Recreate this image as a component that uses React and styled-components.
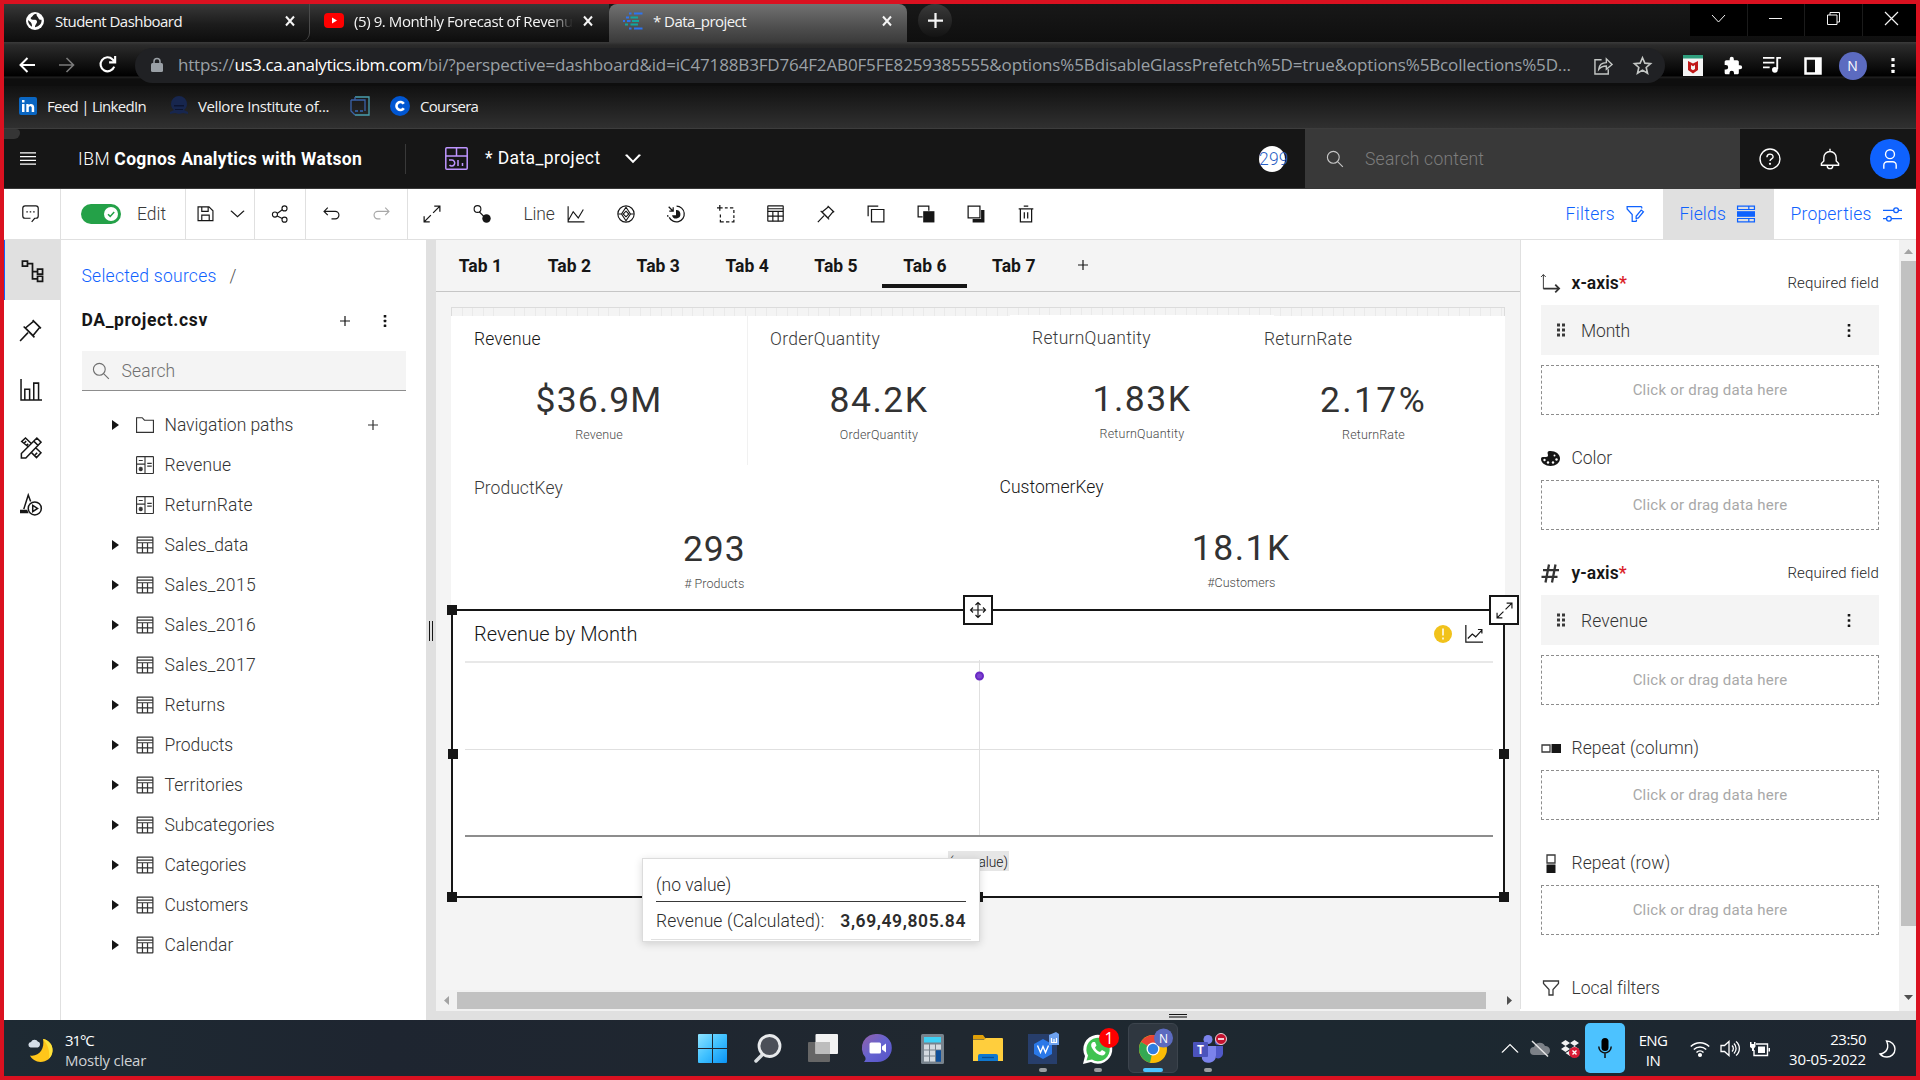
import React from 'react';
import styled, { createGlobalStyle, css } from 'styled-components';

const Global = createGlobalStyle`
  * { box-sizing: border-box; }
  body { margin: 0; background: #fff; }
`;

const plex = '"Roboto", "Liberation Sans", sans-serif';
const segoe = '"Open Sans", "Noto Sans", sans-serif';

/* ---------- frame ---------- */
const Screen = styled.div`
  width: 1920px;
  height: 1080px;
  border: 4px solid #da1120;
  display: flex;
  flex-direction: column;
  overflow: hidden;
  font-family: ${plex};
  font-size: 17.5px;
  font-weight: 350;
  color: #161616;
`;

const Text = styled.span`
  white-space: pre;
  line-height: ${(p) => p.$lh || 24}px;
  font-size: ${(p) => p.$size || 17.5}px;
  font-weight: ${(p) => p.$weight || 'inherit'};
  letter-spacing: ${(p) => p.$ls || 0}px;
  color: ${(p) => p.$color || 'inherit'};
`;

/* ---------- svg icon base ---------- */
const Svg = styled.svg`
  display: block;
  flex: none;
  overflow: visible;
  color: ${(p) => p.$color || 'inherit'};
`;
const Icon = ({ size = 20, color, sw = 2, box = 32, w, h, children }) => (
  <Svg
    width={w || size}
    height={h || size}
    viewBox={`0 0 ${box} ${box}`}
    preserveAspectRatio="none"
    $color={color}
    fill="none"
    stroke="currentColor"
    strokeWidth={sw}
  >
    {children}
  </Svg>
);
const solid = { fill: 'currentColor', stroke: 'none' };

/* ---------- browser chrome ---------- */
const TabStrip = styled.div`
  height: 38px;
  display: flex;
  background: linear-gradient(#181818, #0f0f0f);
  font-family: ${segoe};
  font-weight: 400;
  color: #f4f4f4;
`;
const BrowserTab = styled.div`
  width: ${(p) => p.$w}px;
  height: ${(p) => (p.$active ? 44 : 37)}px;
  padding: 0 ${(p) => p.$end || 14}px ${(p) => (p.$active ? 11 : 4)}px ${(p) => p.$pad}px;
  display: flex;
  align-items: center;
  border-radius: ${(p) => (p.$active ? '8px 8px 0 0' : '0 0 8px 8px')};
  background: ${(p) =>
    p.$active ? 'linear-gradient(#717171, #4a4a4a 60%, #333)' : 'linear-gradient(#383838, #1c1c1c 55%, #0e0e0e)'};
  border-right: ${(p) => (p.$line ? '1px solid #4a4a4a' : '0')};
`;
const TabLabel = styled(Text)`
  flex: 1;
  margin-left: ${(p) => p.$gap || 10}px;
  overflow: hidden;
  ${(p) =>
    p.$fade &&
    css`
      mask-image: linear-gradient(90deg, #000 90%, transparent);
      margin-right: 10px;
    `}
`;
const NewTab = styled.div`
  width: 34px;
  height: 33px;
  margin-left: 11px;
  border-radius: 17px;
  background: linear-gradient(#3a3a3a, #131313);
  display: grid;
  place-items: center;
`;
const WindowButtons = styled.div`
  margin-left: auto;
  display: flex;
  gap: 1px;
  height: 32px;
  background: #1b1b1b;
`;
const WindowButton = styled.div`
  width: ${(p) => p.$w || 56.5}px;
  background: #000;
  display: grid;
  place-items: center;
  padding: 0 0 3px ${(p) => p.$pad || 0}px;
`;

const AddressRow = styled.div`
  height: 44px;
  padding-top: 6px;
  display: flex;
  background: linear-gradient(#3b3b3b 0, #2b2b2b 3px, #000 34px, #222 35px, #0e0e0e 37px, #0e0e0e);
  color: #fff;
  font-weight: 400;
`;
const NavButton = styled.div`
  width: 40px;
  height: 33px;
  display: grid;
  place-items: center;
`;
const NavGroup = styled.div`
  display: flex;
  width: 131px;
  padding-left: 3px;
`;
const AddressBar = styled.div`
  width: 1530px;
  height: 35px;
  border-radius: 18px;
  background: #202124;
  display: flex;
  align-items: center;
  padding: 0 13px 1px 16px;
  color: #9aa0a6;
  font-family: ${segoe};
`;
const Url = styled.div`
  flex: 1;
  display: flex;
  margin-left: 15px;
`;
const AddressIcons = styled.div`
  display: flex;
  gap: 20px;
  color: #c4c7c5;
`;
const Extensions = styled.div`
  display: flex;
  align-items: center;
  height: 35px;
  padding-left: 7.5px;
`;
const ExtSlot = styled.div`
  width: 40px;
  display: grid;
  place-items: center;
`;
const Avatar = styled.div`
  width: ${(p) => p.$d}px;
  height: ${(p) => p.$d}px;
  border-radius: 50%;
  background: ${(p) => p.$bg};
  color: #fff;
  display: grid;
  place-items: center;
  font: ${(p) => p.$font || 14}px ${segoe};
`;

const Bookmarks = styled.div`
  height: 43px;
  background: linear-gradient(#111, #303030);
  border-bottom: 1px solid #3d3d3d;
  display: flex;
  padding-left: 15px;
  font-family: ${segoe};
  font-weight: 400;
  color: #f1f1f1;
`;
const Bookmark = styled.div`
  display: flex;
  align-items: center;
  height: 39px;
  gap: 10px;
  width: ${(p) => p.$w}px;
`;

/* ---------- application header ---------- */
const Header = styled.header`
  height: 60px;
  padding-left: 16px;
  background: #161616;
  border-bottom: 1px solid #393939;
  display: flex;
  align-items: center;
  color: #fff;
  position: relative;
`;
const StatusStub = styled.div`
  position: absolute;
  left: 0;
  top: 0;
  width: 16px;
  height: 10px;
  background: #353535;
  border-radius: 0 4px 6px 0;
`;
const Brand = styled.div`
  display: flex;
  gap: 4px;
  width: 327px;
  margin-left: 42px;
`;
const HeaderRule = styled.div`
  width: 1px;
  height: 30px;
  background: #393939;
`;
const DocTitle = styled.div`
  display: flex;
  align-items: center;
  margin-left: 39px;
`;
const DocName = styled(Text)`
  margin: 0 25px 1px 17px;
  width: 115px;
`;
const CountBadge = styled.div`
  margin-left: auto;
  width: 26px;
  height: 26px;
  border-radius: 50%;
  background: #fff;
  color: #2c5fc4;
  display: flex;
  align-items: center;
  margin-right: 20px;
`;
const HeaderSearch = styled.div`
  width: 435px;
  height: 60px;
  background: #393939;
  display: flex;
  align-items: center;
  gap: 21px;
  padding: 1px 0 0 21px;
  color: #c6c6c6;
`;
const HeaderAction = styled.div`
  width: ${(p) => p.$w || 60}px;
  padding-left: ${(p) => p.$pad || 0}px;
  display: grid;
  place-items: center;
`;

/* ---------- dashboard toolbar ---------- */
const Toolbar = styled.div`
  height: 51px;
  border-bottom: 1px solid #e0e0e0;
  background: #fff;
  display: flex;
`;
const ToolGroup = styled.div`
  display: flex;
  align-items: center;
  width: ${(p) => p.$w}px;
  padding-left: ${(p) => p.$pad || 0}px;
  border-right: 1px solid #e0e0e0;
`;
const Tool = styled.div`
  width: ${(p) => p.$w || 50}px;
  height: 50px;
  margin-right: ${(p) => p.$gap || 0}px;
  display: grid;
  place-items: center;
  padding-bottom: 1px;
  color: ${(p) => (p.$dim ? '#a8a8a8' : '#161616')};
`;
const ToolRow = styled.div`
  display: flex;
  align-items: center;
  margin-left: -1px;
`;
const ToolLabel = styled(Text)`
  width: 32px;
  margin-left: 16.500px;
  color: #393939;
`;
const Toggle = styled.div`
  width: 40px;
  height: 20px;
  border-radius: 10px;
  background: #24a148;
  display: flex;
  justify-content: flex-end;
  padding: 3px;
  margin-right: 16px;
`;
const ToggleKnob = styled.div`
  width: 14px;
  height: 14px;
  border-radius: 50%;
  background: #fff;
  display: grid;
  place-items: center;
`;
const PaneButtons = styled.div`
  margin-left: auto;
  display: flex;
  color: #0f62fe;
`;
const PaneButton = styled.div`
  height: 50px;
  width: ${(p) => p.$w}px;
  padding-left: 16.5px;
  display: flex;
  align-items: center;
  gap: 11.5px;
  background: ${(p) => (p.$active ? '#e0e0e0' : '#fff')};
`;

/* ---------- body ---------- */
const Body = styled.div`
  height: 780px;
  display: flex;
`;
const SideNav = styled.nav`
  width: 57px;
  background: #fff;
  border-right: 1px solid #e0e0e0;
`;
const NavItem = styled.div`
  height: ${(p) => p.$h || 60}px;
  display: grid;
  place-items: center;
  padding-right: ${(p) => (p.$active ? 0 : 4)}px;
  background: ${(p) => (p.$active ? '#e0e0e0' : '#fff')};
  border-left: 1px solid ${(p) => (p.$active ? '#0f62fe' : '#fff')};
`;
const Sources = styled.aside`
  width: 365px;
  background: #fff;
  padding: 24px 20px 0 20.5px;
`;
const Crumb = styled.div`
  display: flex;
  gap: 13px;
  color: #525252;
`;
const SourceHead = styled.div`
  display: flex;
  align-items: center;
  height: 60px;
  margin-top: 2px;
  padding-right: 11px;
`;
const SourceActions = styled.div`
  margin-left: auto;
  display: flex;
  align-items: center;
  gap: 25px;
  padding-top: 1px;
`;
const MenuSlot = styled.div`
  width: ${(p) => p.$w || 20}px;
  display: grid;
  place-items: center;
`;
const SearchBox = styled.div`
  width: 324px;
  height: 40px;
  margin-top: 1px;
  border-bottom: 1px solid #8d8d8d;
  background: #f4f4f4;
  display: flex;
  align-items: center;
  gap: 11.5px;
  padding-left: 10.5px;
  color: #6f6f6f;
`;
const Tree = styled.div`
  padding-top: 14px;
`;
const TreeRow = styled.div`
  height: 40px;
  display: flex;
  align-items: center;
  padding: 0 28px 0 30px;
  color: #333;
`;
const Caret = styled.div`
  width: 24px;
  height: 20px;
  display: flex;
  align-items: center;
`;
const RowLabel = styled(Text)`
  margin-left: 11px;
  flex: 1;
`;
const Splitter = styled.div`
  width: 10px;
  background: #e0e0e0;
  display: flex;
  justify-content: center;
  gap: 2px;
  padding-top: 381px;
`;
const Grip = styled.i`
  width: ${(p) => p.$w || 1}px;
  height: ${(p) => p.$h || 20}px;
  background: ${(p) => p.$bg || '#161616'};
`;
const Stage = styled.div`
  flex: 1;
  display: flex;
  flex-direction: column;
`;
const StageRow = styled.div`
  height: 771px;
  display: flex;
`;
const BottomStrip = styled.div`
  height: 9px;
  background: #e0e0e0;
  display: flex;
  flex-direction: column;
  gap: 1px;
  padding: 3px 0 0 733px;
`;

const Center = styled.main`
  width: 1084px;
  background: #f4f4f4;
  display: flex;
  flex-direction: column;
`;
const Tabs = styled.div`
  height: 52px;
  border-bottom: 1px solid #c6c6c6;
  display: flex;
  gap: 4px;
  padding-left: 2px;
`;
const Tab = styled.div`
  width: 84.9px;
  height: 48px;
  padding-top: 14px;
  text-align: center;
  border-bottom: 4px solid ${(p) => (p.$active ? '#161616' : 'transparent')};
`;
const AddTab = styled.div`
  padding-left: 18px;
`;
const Board = styled.div`
  width: 1054px;
  margin: 15px 0 0 15px;
  position: relative;
`;
const Ruler = styled.div`
  height: 9px;
  border: 1px solid #dcdcdc;
  border-bottom: 0;
  background: repeating-linear-gradient(90deg, transparent 0 9.5px, #eaeaea 9.5px 10.5px);
`;
const CardRow = styled.div`
  display: flex;
  height: ${(p) => p.$h}px;
  background: #fff;
`;
const Card = styled.section`
  width: ${(p) => p.$w}px;
  margin-right: ${(p) => p.$overlap || 0}px;
  margin-top: ${(p) => (p.$up ? -1 : 0)}px;
  flex: none;
  background: ${(p) => (p.$clear ? 'transparent' : '#fff')};
  padding-top: 11px;
  display: flex;
  flex-direction: column;
  border-right: ${(p) => (p.$edge ? '1px solid #f1f1f1' : '0')};
`;
const CardTitle = styled(Text)`
  margin: 0 0 28px ${(p) => p.$x || 23}px;
`;
const CardValue = styled(Text)`
  text-align: center;
  margin-bottom: 6px;
`;
const CardNote = styled(Text)`
  text-align: center;
`;
const Widget = styled.section`
  position: relative;
  width: 1054px;
  height: 289px;
  border: 2px solid #161616;
  background: #fff;
`;
const WidgetHead = styled.div`
  display: flex;
  align-items: center;
  height: 47px;
  padding: 0 20.5px 2px 21px;
`;
const WidgetIcons = styled.div`
  margin-left: auto;
  display: flex;
  gap: 13px;
  align-items: center;
`;
const Plot = styled.div`
  height: 180px;
  padding-left: 11.5px;
`;
const Handle = styled.i`
  position: absolute;
  left: ${(p) => p.$x - 5}px;
  top: ${(p) => p.$y - 5}px;
  width: 10px;
  height: 10px;
  background: #161616;
`;
const CornerButton = styled.div`
  position: absolute;
  left: ${(p) => p.$x}px;
  top: -16px;
  width: 30px;
  height: 30px;
  border: 2px solid #161616;
  background: #fff;
  display: grid;
  place-items: center;
`;
const AxisLabel = styled.div`
  margin: 13px 0 0 495px;
  width: 61px;
  height: 20px;
  background: #e6e6e6;
  text-align: center;
  line-height: 20px;
`;
const Tooltip = styled.div`
  position: absolute;
  left: 189px;
  top: 247px;
  width: 338px;
  height: 84px;
  background: #fff;
  border: 1px solid #dcdcdc;
  box-shadow: 0 2px 8px rgba(0, 0, 0, 0.15);
  padding: 14px 13px 0;
  color: #2c2c2c;
`;
const TipHead = styled.div`
  border-bottom: 1px solid #393939;
  height: 29px;
`;
const TipRow = styled.div`
  display: flex;
  justify-content: space-between;
  height: 38px;
  padding: 7px 5px 0;
  margin: 0 -5px;
  border-bottom: 1px solid #e0e0e0;
`;
const HScroll = styled.div`
  margin-top: auto;
  height: 21px;
  background: #f1f1f1;
  display: flex;
  align-items: center;
  padding: 0 8px 0 8px;
`;
const HThumb = styled.div`
  width: 1029px;
  height: 17px;
  margin: 0 auto 0 8px;
  background: #c1c1c1;
`;

/* ---------- fields pane ---------- */
const Fields = styled.aside`
  width: 379px;
  height: 769px;
  background: #fff;
  border-left: 1px solid #e0e0e0;
  padding: 21px 20px 0;
`;
const Slot = styled.section`
  margin-bottom: ${(p) => p.$mb || 21}px;
`;
const SlotHead = styled.div`
  height: 44px;
  display: flex;
  align-items: center;
  color: #333;
`;
const SlotIcon = styled.div`
  width: 30.5px;
`;
const SlotName = styled(Text)`
  flex: 1;
`;
const Star = styled.span`
  color: #da1e28;
`;
const FieldBox = styled.div`
  height: 50px;
  margin-bottom: 10px;
  background: #f4f4f4;
  display: flex;
  align-items: center;
  padding: 0 24px 0 12px;
  color: #333;
`;
const FieldName = styled(Text)`
  flex: 1;
  margin-left: 12px;
  padding-top: 1px;
`;
const DropBox = styled.div`
  height: 50px;
  border: 1px dashed #8d8d8d;
  display: grid;
  place-items: center;
  font-weight: 400;
`;
const VScroll = styled.div`
  width: 17px;
  background: #f1f1f1;
  display: flex;
  flex-direction: column;
  align-items: flex-end;
  padding: 9px 0 11px;
`;
const VThumb = styled.div`
  width: 15px;
  height: 665px;
  margin: 7px 0 auto;
  background: #c1c1c1;
`;
const ArrowSlot = styled.div`
  width: 12px;
  height: 5px;
`;

/* ---------- taskbar ---------- */
const Taskbar = styled.footer`
  height: 56px;
  background: linear-gradient(90deg, #1e2a33, #1e2530 20%, #202830 50%, #1c2830 75%, #1e2630);
  display: flex;
  align-items: center;
  font-family: ${segoe};
  font-weight: 400;
  color: #fff;
`;
const Weather = styled.div`
  width: 681px;
  display: flex;
  align-items: center;
  gap: 11px;
  padding: 4px 0 0 24px;
`;
const Lines = styled.div`
  display: flex;
  flex-direction: column;
  align-items: ${(p) => p.$align || 'flex-start'};
  padding-top: ${(p) => p.$top || 0}px;
`;
const DockItem = styled.div`
  width: ${(p) => (p.$active ? 50 : 55)}px;
  margin: ${(p) => (p.$active ? '0 2.5px' : '0')};
  height: 50px;
  border-radius: 6px;
  display: flex;
  flex-direction: column;
  align-items: center;
  padding-top: ${(p) => (p.$active ? 10 : 11)}px;
  border: ${(p) => (p.$active ? '1px solid #3c444d' : '0')};
  background: ${(p) => (p.$active ? '#2f3740' : 'transparent')};
`;
const Running = styled.i`
  width: ${(p) => (p.$active ? 20 : 8)}px;
  height: 4px;
  border-radius: 2px;
  margin-top: 4px;
  background: ${(p) => (p.$active ? '#4cc2ff' : '#9a9da1')};
`;
const Tray = styled.div`
  margin-left: auto;
  display: flex;
  align-items: center;
`;
const TrayIcon = styled.div`
  width: ${(p) => p.$w || 30}px;
  padding-top: 1px;
  padding-right: ${(p) => p.$pr || 0}px;
  display: grid;
  place-items: center;
`;
const Mic = styled.div`
  width: 40px;
  height: 50px;
  border-radius: 5px;
  background: #4cc2ff;
  display: grid;
  place-items: center;
`;
const Clock = styled(Lines)`
  width: 87px;
`;

/* ---------- glyphs ---------- */
const CloseX = () => (
  <Icon size={10} box={10} sw={2}><path d="M1 0.5l8 9M9 0.5l-8 9" /></Icon>
);
const Plus = ({ size = 10, sw = 1.2, color }) => (
  <Icon size={size} box={10} sw={sw} color={color}><path d="M5 0v10M0 5h10" /></Icon>
);
const Kebab = ({ h = 12, r = 1.3, color = '#161616' }) => (
  <Svg width="4" height={h} viewBox={`0 0 4 ${h}`} fill={color}>
    <rect x={2 - r} y="0" width={2 * r} height={2 * r} rx=".5" />
    <rect x={2 - r} y={h / 2 - r} width={2 * r} height={2 * r} rx=".5" />
    <rect x={2 - r} y={h - 2 * r} width={2 * r} height={2 * r} rx=".5" />
  </Svg>
);
const SearchGlyph = ({ size = 18 }) => (
  <Icon size={size} sw={2}><circle cx="13" cy="13" r="10.5" /><path d="M21 21l9 9" /></Icon>
);
const PinGlyph = ({ size }) => (
  <Icon size={size} sw={2.2}>
    <path d="M19 1.500l11.500 11.500M20.500 3L9 12.500l10.500 10.500L29 11.500M6.500 10.500l15 15M12.500 19L1.500 30.500" />
  </Icon>
);
const TableGlyph = ({ size = 17 }) => (
  <Icon size={size} sw={2.2}>
    <rect x="1.500" y="1.500" width="29" height="29" rx="1" />
    <path d="M1.500 7h29M1.500 12h29M1.500 21h29M11 12v18.500M21 12v18.500" />
  </Icon>
);
const ExpandGlyph = ({ size = 18 }) => (
  <Icon size={size} sw={2.2}><path d="M20 2h10v10M30 2L18 14M12 30H2V20M2 30L14 18" /></Icon>
);
const CalcGlyph = () => (
  <Icon size={18} sw={2}>
    <rect x="1" y="1" width="30" height="30" rx="1" />
    <path d="M16 1v30M1 14.500h15M5 8h7M20 13h8M20 18h8M8.500 19v8M4.500 23h8M5.800 20.200l5.400 5.600M11.200 20.200l-5.400 5.600" />
  </Icon>
);
const CaretRight = () => (
  <Svg width="7" height="10" viewBox="0 0 7 10" fill="#161616"><path d="M0 0l7 5-7 5z" /></Svg>
);

/* ---------- data ---------- */
const tree = [
  { name: 'Navigation paths', kind: 'folder', ls: -0.04, add: true },
  { name: 'Revenue', kind: 'calc', ls: 0.14 },
  { name: 'ReturnRate', kind: 'calc', ls: 0.22 },
  { name: 'Sales_data', ls: 0.08 },
  { name: 'Sales_2015', ls: 0.35 },
  { name: 'Sales_2016', ls: 0.35 },
  { name: 'Sales_2017', ls: 0.35 },
  { name: 'Returns', ls: 0.15 },
  { name: 'Products', ls: -0.09 },
  { name: 'Territories', ls: 0.11 },
  { name: 'Subcategories', ls: 0 },
  { name: 'Categories', ls: -0.1 },
  { name: 'Customers', ls: -0.08 },
  { name: 'Calendar', ls: 0.09 },
];

const topCards = [
  { title: 'Revenue', tls: 0.14, value: '$36.9M', vls: 1.1, nls: 0.1, w: 297, edge: true, dark: true },
  { title: 'OrderQuantity', tls: 0.3, value: '84.2K', vls: 1.5, nls: 0.19, w: 262, x: 22 },
  { title: 'ReturnQuantity', tls: 0.28, value: '1.83K', vls: 1.5, nls: 0.2, w: 264, overlap: -32, up: true, x: 22 },
  { title: 'ReturnRate', tls: 0.22, value: '2.17%', vls: 2.4, nls: 0.13, w: 263, clear: true, x: 22 },
];
const lowCards = [
  { title: 'ProductKey', tls: 0.04, value: '293', vls: 0.9, note: '# Products', nls: 0.04, w: 526.5 },
  { title: 'CustomerKey', tls: 0.05, value: '18.1K', vls: 1.5, note: '#Customers', nls: 0.05, w: 527.5, up: true, dark: true, x: 22 },
];

const MetricCard = ({ c }) => (
  <Card $w={c.w} $edge={c.edge} $overlap={c.overlap} $up={c.up} $clear={c.clear}>
    <CardTitle $ls={c.tls} $x={c.x} $color={c.dark ? '#161616' : '#3a3a3a'}>{c.title}</CardTitle>
    <CardValue $lh={42} $size={35.5} $weight={450} $ls={c.vls} $color="#323232">{c.value}</CardValue>
    <CardNote $lh={16} $size={12.5} $ls={c.nls} $color="#4c4c4c">{c.note || c.title}</CardNote>
  </Card>
);

const Drop = () => (
  <DropBox><Text $size={15} $ls={0.22} $color="#a8a8a8">Click or drag data here</Text></DropBox>
);
const Field = ({ name, ls }) => (
  <FieldBox>
    <Svg width="16" height="14" viewBox="0 0 16 14" fill="#393939">
      {[0.5, 5.5, 10.5].map((y) => (
        <g key={y}><rect x="4" y={y} width="3" height="3" /><rect x="9" y={y} width="3" height="3" /></g>
      ))}
    </Svg>
    <FieldName $ls={ls}>{name}</FieldName>
    <MenuSlot $w={12}><Kebab h={13} /></MenuSlot>
  </FieldBox>
);

function Browser() {
  return (
    <>
      <TabStrip>
        <BrowserTab $w={306} $pad={22} $line>
          <Svg width="18" height="18" viewBox="0 0 18 18">
            <circle cx="9" cy="9" r="9" fill="#fff" />
            <path d="M10.500 1.800C7 2 7 4.500 5 5.500c-1 1 .5 2.500 2.500 2.200 2-.2 3.500.3 3.500 2 0 2-2 2.500-2 5.500 4.500-1 7-4 6.500-7.500-1 .3-2.500 0-3-1.500s-2-1.500-2-4.400zM2 8c0 3 1.500 5.500 4 6.800 0-2-.3-3.800-1.500-4.800C3.500 9.200 2.800 8.500 2 8z" fill="#222" />
          </Svg>
          <TabLabel $size={15} $ls={-0.54} $gap={11}>Student Dashboard</TabLabel>
          <CloseX />
        </BrowserTab>
        <BrowserTab $w={299} $pad={14} $end={16}>
          <Svg width="20" height="15" viewBox="0 0 20 15"><rect width="20" height="15" rx="4" fill="#f00" /><path d="M8 4.500v6l5-3z" fill="#fff" /></Svg>
          <TabLabel $size={15} $ls={-0.41} $fade>(5) 9. Monthly Forecast of Revenue</TabLabel>
          <CloseX />
        </BrowserTab>
        <BrowserTab $w={298} $pad={14} $end={15} $active>
          <Svg width="20" height="18" viewBox="0 0 20 18" strokeWidth="2.200" fill="none">
            <path d="M6 1.500h2.500M11 1.500h8.500M0 9h2M4 9h3.500M6 16.500h2.500M11 16.500h8.500M3 5.500h3" stroke="#2d74f0" />
            <path d="M7.500 5.500H15M9 9h7M2 12.500h3M7.500 12.500H15" stroke="#12a5a0" />
          </Svg>
          <TabLabel $size={15} $ls={-0.55}>* Data_project</TabLabel>
          <CloseX />
        </BrowserTab>
        <NewTab><Plus size={15} sw={1.5} /></NewTab>
        <WindowButtons>
          <WindowButton><Icon size={13} box={13} sw={1}><path d="M0 3l6.500 7L13 3" /></Icon></WindowButton>
          <WindowButton><Icon size={13} box={13} sw={1}><path d="M0 6.500h13" /></Icon></WindowButton>
          <WindowButton $w={57}><Icon size={13} box={13} sw={1}><path d="M.5 3h9.500v9.500H.5zM3 3V.5h9.500V10H10" /></Icon></WindowButton>
          <WindowButton $w={53} $pad={3}><Icon size={13} box={13} sw={1.2}><path d="M0 0l13 13M13 0L0 13" /></Icon></WindowButton>
        </WindowButtons>
      </TabStrip>
      <AddressRow>
        <NavGroup>
          <NavButton><Icon size={16} box={16}><path d="M16 8H1.500M8.500 1L1.500 8l7 7" /></Icon></NavButton>
          <NavButton><Icon size={16} box={16} color="#7b7b7b" sw={1.6}><path d="M0 8h14.500M7.500 1l7 7-7 7" /></Icon></NavButton>
          <NavButton><Icon size={17} box={16}><path d="M14.300 10a6.600 6.600 0 1 1-1.500-6.800L15 5.500M15.200 0v6H9.500" /></Icon></NavButton>
        </NavGroup>
        <AddressBar>
          <Svg width="12" height="14" viewBox="0 0 12 14" fill="#9aa0a6"><rect y="5" width="12" height="9" rx="1.500" /><path d="M3 6V3.500a3 3 0 0 1 6 0V6" fill="none" stroke="#9aa0a6" strokeWidth="1.500" /></Svg>
          <Url>
            <Text $size={17} $ls={-0.2}>https://</Text>
            <Text $size={17} $ls={-0.4} $color="#fff">us3.ca.analytics.ibm.com</Text>
            <Text $size={17} $ls={-0.145}>/bi/?perspective=dashboard&id=iC47188B3FD764F2AB0F5FE8259385555&options%5BdisableGlassPrefetch%5D=true&options%5Bcollections%5D...</Text>
          </Url>
          <AddressIcons>
            <Icon size={19} box={20} sw={1.500}><path d="M8 4H1v15h14v-5M5 14c.5-5 3-7 8-7V3l6 6-6 5v-3.500c-4 0-6 1-8 3.500z" /></Icon>
            <Icon size={19} box={20} sw={1.700}><path d="M10 1.800l2.500 5.700 6 .6-4.600 4 1.400 6-5.300-3.200-5.300 3.200 1.400-6-4.600-4 6-.6z" /></Icon>
          </AddressIcons>
        </AddressBar>
        <Extensions>
          <ExtSlot><Svg width="20" height="21" viewBox="0 0 20 21"><rect width="20" height="21" fill="#f4f4f4" /><rect width="20" height="3.500" fill="#2f9e7d" /><path d="M5 6l5 2.500L15 6v9l-5 3.500L5 15zM8 10v4l2 1.300 2-1.300v-4l-2 1.200z" fill="#c01818" fillRule="evenodd" /></Svg></ExtSlot>
          <ExtSlot><Svg width="20" height="20" viewBox="0 0 24 24" fill="#fff"><path d="M20.500 11H19V7c0-1.100-.9-2-2-2h-4V3.500a2.500 2.500 0 0 0-5 0V5H4c-1.100 0-2 .9-2 2v3.800h1.500a2.700 2.700 0 0 1 0 5.400H2V20c0 1.100.9 2 2 2h3.800v-1.500a2.700 2.700 0 0 1 5.400 0V22H17c1.100 0 2-.9 2-2v-4h1.500a2.500 2.500 0 0 0 0-5z" /></Svg></ExtSlot>
          <ExtSlot><Icon size={19} box={20}><path d="M0 2h12M0 7h12M0 12h7M15 14V2h4" /><circle cx="12.500" cy="14.500" r="3" {...solid} /></Icon></ExtSlot>
          <ExtSlot><Icon size={18} box={18} sw={2.500}><path d="M1.500 1.500h15v15h-15z" /><path d="M11 1h6v16h-6z" {...solid} /></Icon></ExtSlot>
          <ExtSlot><Avatar $d={28} $bg="#5c6bc0">N</Avatar></ExtSlot>
          <ExtSlot><Kebab h={15} r={1.600} color="#fff" /></ExtSlot>
        </Extensions>
      </AddressRow>
      <Bookmarks>
        <Bookmark $w={151}>
          <Svg width="18" height="18" viewBox="0 0 18 18"><rect width="18" height="18" rx="2" fill="#0a66c2" /><path d="M3 7h2.500v8H3zM3 3h2.500v2.500H3zM7.300 7h2.400v1.200c.8-2 5.500-2 5.500 2V15h-2.500v-4.300c0-2-2.900-2-2.900 0V15H7.300z" fill="#fff" /></Svg>
          <Text $size={15} $ls={-0.7}>Feed | LinkedIn</Text>
        </Bookmark>
        <Bookmark $w={180}>
          <Svg width="18" height="19" viewBox="0 0 18 19" fill="#17264e"><path d="M9 0a8 8 0 0 1 8 8c0 3-1.500 5-3 6l4 2v2l-5-1-4 1-4-1-5 1v-2l4-2c-1.500-1-3-3-3-6a8 8 0 0 1 8-8z" /><path d="M4 9h10v1.500H4zM5 13h8v1H5z" fill="#0c1430" /></Svg>
          <Text $size={15} $ls={-0.4}>Vellore Institute of...</Text>
        </Bookmark>
        <Bookmark $w={40}>
          <Svg width="20" height="20" viewBox="0 0 20 20" fill="none" strokeWidth="1.300"><path d="M5 1h14v18H5" stroke="#4a9fae" /><path d="M5 1v3M1 4h14v11M1 4v11l4 4" stroke="#3a62a8" /><path d="M5 15h3M10 15h3" stroke="#3568b8" /></Svg>
        </Bookmark>
        <Bookmark $w={120}>
          <Avatar $d={20} $bg="#0056d2"><Icon size={10} box={10} sw={2.600}><path d="M8.800 2.800a4 4 0 1 0 0 4.400" /></Icon></Avatar>
          <Text $size={15} $ls={-0.7}>Coursera</Text>
        </Bookmark>
      </Bookmarks>
    </>
  );
}

function AppHeader() {
  return (
    <Header>
      <StatusStub />
      <Icon w={16} h={13} box={16} sw={1.600}><path d="M0 1h16M0 5.700h16M0 10.300h16M0 15h16" /></Icon>
      <Brand>
        <Text $ls={0.6}>IBM</Text>
        <Text $ls={0.35} $weight={700}>Cognos Analytics with Watson</Text>
      </Brand>
      <HeaderRule />
      <DocTitle>
        <Icon size={23} box={23} sw={1.500} color="#be95ff">
          <rect x=".8" y=".8" width="21.400" height="21.400" rx="1" />
          <path d="M.8 9h21.400M11.500.8V9M4 13h3a3 3 0 1 1-2.500 5M13 19v-6M17.500 19v-3" />
        </Icon>
        <DocName $ls={0.4} $weight={400}>* Data_project</DocName>
        <Icon w={16} h={9} box={16} sw={2.400}><path d="M1 1l7 13 7-13" /></Icon>
      </DocTitle>
      <CountBadge><Text $ls={0.2}>299</Text></CountBadge>
      <HeaderSearch>
        <SearchGlyph size={18} />
        <Text $ls={0.24} $color="#7d7d7d">Search content</Text>
      </HeaderSearch>
      <HeaderAction><Icon size={22} sw={2}><circle cx="16" cy="16" r="14.500" /><path d="M11.500 13.500c0-6 9-6 9-.500 0 3-4.500 2.500-4.500 6" /><circle cx="16" cy="23" r="1.600" {...solid} /></Icon></HeaderAction>
      <HeaderAction><Icon size={22} sw={2}><path d="M28.500 22.500L25 19v-5a9 9 0 0 0-18 0v5l-3.500 3.500V25h25zM12 25v1a4 4 0 0 0 8 0v-1M16 5V1" /></Icon></HeaderAction>
      <HeaderAction $w={56} $pad={4}>
        <Avatar $d={40} $bg="#0f62fe"><Icon size={22} sw={2}><circle cx="16" cy="9" r="6.500" /><path d="M7 30v-5a5 5 0 0 1 5-5h8a5 5 0 0 1 5 5v5" /></Icon></Avatar>
      </HeaderAction>
    </Header>
  );
}

function DashboardToolbar() {
  return (
    <Toolbar>
      <ToolGroup $w={57}>
        <Tool $w={52}><Icon size={19} sw={2}><path d="M16 24h-9a4 4 0 0 1-4-4V7a4 4 0 0 1 4-4h18a4 4 0 0 1 4 4v13a4 4 0 0 1-4 4h-2l-5 6" /><path d="M9 12h2.500v2.500H9zM14.700 12h2.500v2.500h-2.500zM20.500 12H23v2.500h-2.500z" {...solid} /></Icon></Tool>
      </ToolGroup>
      <ToolGroup $w={125} $pad={20}>
        <Toggle><ToggleKnob><Icon size={8} box={8} sw={1.500} color="#24a148"><path d="M1 4.200l2.200 2.200L7.200 2" /></Icon></ToggleKnob></Toggle>
        <Text $ls={0} $color="#393939">Edit</Text>
      </ToolGroup>
      <ToolGroup $w={69} $pad={3}>
        <Tool $w={33}><Icon size={17} sw={2.200}><path d="M2 3.500h20.500L30 11v18.500H2zM9 3.500V12h12V3.500M9 29.500V19h14v10.500" /></Icon></Tool>
        <Tool $w={34}><Icon w={13} h={8} box={12} sw={1.400}><path d="M0 1l6 9 6-9" /></Icon></Tool>
      </ToolGroup>
      <ToolGroup $w={51}>
        <Tool><Icon size={18} sw={2}><circle cx="7" cy="17" r="4.500" /><circle cx="24" cy="6" r="4.500" /><circle cx="24" cy="26" r="4.500" /><path d="M11 15l9-6.500M11 19.500l9 4.500" /></Icon></Tool>
      </ToolGroup>
      <ToolGroup $w={102}>
        <Tool><Icon size={17} sw={2.200}><path d="M9 5L2 12l7 7M2 12h21a7 7 0 0 1 0 14h-7" /></Icon></Tool>
        <Tool $dim><Icon size={17} sw={2.200}><path d="M23 5l7 7-7 7M30 12H9a7 7 0 0 0 0 14h5" /></Icon></Tool>
      </ToolGroup>
      <ToolRow>
        <Tool><ExpandGlyph size={18} /></Tool>
        <Tool><Icon size={18} sw={2}><circle cx="8" cy="7" r="6" /><path d="M11 12l8 8" /><circle cx="24" cy="24" r="7.500" {...solid} /></Icon></Tool>
        <ToolLabel $ls={-0.15}>Line</ToolLabel>
        <Tool $w={41} $gap={4}><Icon size={18} sw={2}><path d="M2 2v28h29M2 28L11 12l9 11 9-15" /></Icon></Tool>
        <Tool><Icon size={18} sw={2}><circle cx="16" cy="16" r="14.500" /><path d="M16 4l8 12-8 12L8 16zM16 11l5 5-5 5-5-5zM2 16h6M24 16h6" /></Icon></Tool>
        <Tool><Icon size={18} sw={2.200}><path d="M17 2a14 14 0 1 1-13 20M1 18a14 14 0 0 0 1 3M3 3l8 8M11 4v7H4" /><path d="M16 9a7.500 7.500 0 1 1-7 9h7z" {...solid} /></Icon></Tool>
        <Tool><Icon size={18} sw={2.200}><path d="M5 0v10M0 5h10M14 5h5M23 5h6M30 9v5M30 18v5M30 26v4h-4M22 30h-6M12 30H6v-4M6 22v-5" /></Icon></Tool>
        <Tool><TableGlyph size={17} /></Tool>
        <Tool><PinGlyph size={18} /></Tool>
        <Tool><Icon size={18} sw={2.200}><path d="M8 8h22v22H8zM2 20V2h18" /></Icon></Tool>
        <Tool><Icon size={18} sw={2.200}><path d="M10 21H2V2h19v8" /><path d="M11 11h20v20H11z" {...solid} /></Icon></Tool>
        <Tool><Icon size={18} sw={2.200}><path d="M2 2h21v21H2z" /><path d="M25 9h6v22H10v-6h15z" {...solid} /></Icon></Tool>
        <Tool><Icon size={18} sw={2.200}><path d="M3 7h26M6 7v23h20V7M12 2h8M13 13v11M19 13v11" /></Icon></Tool>
      </ToolRow>
      <PaneButtons>
        <PaneButton $w={114}><Text $ls={0.33}>Filters</Text><Icon size={18} sw={2.200}><path d="M24 3H2v4l9 10v12h7l1-3M28 3v3M24 3h4" /><path d="M18 20L27 9l4 3-9 11-4 1z" /></Icon></PaneButton>
        <PaneButton $w={111} $active><Text $ls={0.18}>Fields</Text><Icon size={18} sw={2.200}><path d="M1 2h30v6H1zM1 24h30v6H1zM21 2v6M21 24v6" /><path d="M0 11h32v10H0z" {...solid} /></Icon></PaneButton>
        <PaneButton $w={142}><Text $ls={0.21}>Properties</Text><Icon size={19} sw={2.200}><circle cx="22" cy="9" r="4" /><circle cx="10" cy="23" r="4" /><path d="M0 9h18M26 9h6M0 23h6M14 23h18" /></Icon></PaneButton>
      </PaneButtons>
    </Toolbar>
  );
}

function LeftSide() {
  return (
    <>
      <SideNav>
        <NavItem $active><Icon size={23} sw={2.400}><path d="M2 3h7v7H2zM23 14h7v7h-7zM23 24h7v7h-7zM9 6.500h7V27.500h7M16 17.500h7" /></Icon></NavItem>
        <NavItem><PinGlyph size={23} /></NavItem>
        <NavItem><Icon size={22} sw={2.200}><path d="M1.500 0v30.500H32M7 30V15h7v15M20 30V6h7v24" /></Icon></NavItem>
        <NavItem $h={56}><Icon size={22} sw={2.200}><path d="M30.500 7.500l-6-6L2 24v6.500h6.500zM20 6l6 6M12 14L2.500 6.500 8 1.500 16 9M22 15l8.500 8L24 30l-8-8M6 9l3-3M10 12l2-2M22 26l3-3" /></Icon></NavItem>
        <NavItem $h={58}><Icon size={22} sw={2.200}><circle cx="21.500" cy="21" r="9.500" /><path d="M18.500 16.500v9l7-4.500zM5.500 22L12 1.500 15.500 11" /><path d="M0 23h10.500l2 5H0z" {...solid} /></Icon></NavItem>
      </SideNav>
      <Sources>
        <Crumb><Text $ls={0.25} $color="#0f62fe">Selected sources</Text><Text>/</Text></Crumb>
        <SourceHead>
          <Text $weight={700} $ls={0.62}>DA_project.csv</Text>
          <SourceActions><Plus /><MenuSlot><Kebab h={12} /></MenuSlot></SourceActions>
        </SourceHead>
        <SearchBox><SearchGlyph /><Text $ls={0.11}>Search</Text></SearchBox>
        <Tree>
          {tree.map((n) => (
            <TreeRow key={n.name}>
              <Caret>{n.kind !== 'calc' && <CaretRight />}</Caret>
              {n.kind === 'folder' ? (
                <Icon size={18} sw={2}><path d="M1 3h10l4 4.500h16V29H1z" /></Icon>
              ) : n.kind === 'calc' ? <CalcGlyph /> : <Icon size={18} sw={2.200}><rect x="2" y="2" width="28" height="28" rx="1" /><path d="M2 7.500h28M2 12h28M2 21h28M11.500 12v18M20.500 12v18" /></Icon>}
              <RowLabel $ls={n.ls}>{n.name}</RowLabel>
              {n.add && <Plus />}
            </TreeRow>
          ))}
        </Tree>
      </Sources>
      <Splitter><Grip /><Grip /></Splitter>
    </>
  );
}

function DashboardCanvas() {
  return (
    <Center>
      <Tabs>
        {[1, 2, 3, 4, 5, 6, 7].map((n) => (
          <Tab key={n} $active={n === 6}><Text $weight={700} $ls={0.05}>{`Tab ${n}`}</Text></Tab>
        ))}
        <AddTab><Tool $w={10}><Plus /></Tool></AddTab>
      </Tabs>
      <Board>
        <Ruler />
        <CardRow $h={149}>{topCards.map((c) => <MetricCard key={c.title} c={c} />)}</CardRow>
        <CardRow $h={144}>{lowCards.map((c) => <MetricCard key={c.title} c={c} />)}</CardRow>
        <Widget>
          <WidgetHead>
            <Text $size={20} $ls={0.08} $color="#161616">Revenue by Month</Text>
            <WidgetIcons>
              <Svg width="18" height="18" viewBox="0 0 18 18"><circle cx="9" cy="9" r="9" fill="#f1c21b" /><path d="M9 3.500v7M9 12.500v2" stroke="#fff" strokeWidth="1.500" /></Svg>
              <Icon size={18} sw={2.200}><path d="M1.500 0v30.500H32M5 24l8-8 6 5L30 9M23 8h7v7" /></Icon>
            </WidgetIcons>
          </WidgetHead>
          <Plot>
            <Svg width="1028" height="180" viewBox="0 0 1028 180" fill="none">
              <path d="M0 4h1028" stroke="#e8e8e8" strokeWidth="2" />
              <path d="M0 91.500h1028" stroke="#e0e0e0" />
              <path d="M514.500 2v175" stroke="#e0e0e0" />
              <path d="M0 178h1028" stroke="#8d8d8d" strokeWidth="2" />
              <circle cx="514.500" cy="18" r="3.500" fill="#7d45cf" stroke="#6929c4" strokeWidth="2" />
            </Svg>
          </Plot>
          <AxisLabel><Text $size={13.75} $lh={18} $ls={-0.04}>(no value)</Text></AxisLabel>
          <Handle $x={-1} $y={-1} />
          <Handle $x={0} $y={143} />
          <Handle $x={-1} $y={286} />
          <Handle $x={525} $y={286} />
          <Handle $x={1051} $y={143} />
          <Handle $x={1051} $y={286} />
          <CornerButton $x={510}>
            <Icon size={16} sw={2.300}><path d="M16 1v30M1 16h30M11 6l5-5 5 5M11 26l5 5 5-5M6 11l-5 5 5 5M26 11l5 5-5 5" /></Icon>
          </CornerButton>
          <CornerButton $x={1036}><ExpandGlyph size={17} /></CornerButton>
          <Tooltip>
            <TipHead><Text $ls={0}>(no value)</Text></TipHead>
            <TipRow><Text $ls={0.12}>Revenue (Calculated):</Text><Text $weight={600} $ls={0.6}>3,69,49,805.84</Text></TipRow>
          </Tooltip>
        </Widget>
      </Board>
      <HScroll>
        <Svg width="5" height="9" viewBox="0 0 5 9" fill="#a3a3a3"><path d="M5 0v9L0 4.500z" /></Svg>
        <HThumb />
        <Svg width="5" height="9" viewBox="0 0 5 9" fill="#505050"><path d="M0 0v9l5-4.500z" /></Svg>
      </HScroll>
    </Center>
  );
}

function FieldsPane() {
  return (
    <>
      <Fields>
        <Slot>
          <SlotHead>
            <SlotIcon><Icon size={19} sw={1.600}><path d="M4 25V1M0 5l4-4 4 4" /><path d="M4 24.500h26M24 18l6.500 6.500L24 31" strokeWidth="3" /></Icon></SlotIcon>
            <SlotName $weight={600} $ls={0.05} $color="#161616">x-axis<Star>*</Star></SlotName>
            <Text $size={15} $ls={0.13} $color="#262626">Required field</Text>
          </SlotHead>
          <Field name="Month" ls={-0.15} />
          <Drop />
        </Slot>
        <Slot>
          <SlotHead>
            <SlotIcon>
              <Svg width="19" height="15" viewBox="0 0 19 15"><path d="M9.500 0C14.500 0 19 3 19 7.500S14.500 15 9.500 15 0 12 0 8c0-2 1.500-2 3-2 3 0 4 0 4-1.500C7 3 6 2 7 .5 8 .1 9 0 9.500 0z" fill="#161616" /><g fill="#fff"><circle cx="3.500" cy="9" r="1.200" /><circle cx="7" cy="11.500" r="1.200" /><circle cx="12" cy="11.500" r="1.200" /><circle cx="15.500" cy="8.500" r="1.200" /><circle cx="13.500" cy="4.500" r="1" /></g></Svg>
            </SlotIcon>
            <SlotName $ls={-0.05}>Color</SlotName>
          </SlotHead>
          <Drop />
        </Slot>
        <Slot>
          <SlotHead>
            <SlotIcon><Icon size={19} box={19} sw={2.300}><path d="M8 .5L4.500 18.500M14.500.5L11 18.500M2 6.200h16M.5 12.800h16" /></Icon></SlotIcon>
            <SlotName $weight={600} $ls={0.05} $color="#161616">y-axis<Star>*</Star></SlotName>
            <Text $size={15} $ls={0.13} $color="#262626">Required field</Text>
          </SlotHead>
          <Field name="Revenue" ls={0.14} />
          <Drop />
        </Slot>
        <Slot>
          <SlotHead>
            <SlotIcon><Svg width="20" height="9" viewBox="0 0 20 9"><path d="M1 1h8v7H1z" fill="#fff" stroke="#393939" strokeWidth="1.300" /><path d="M10.500 0H20v9h-9.500z" fill="#161616" /></Svg></SlotIcon>
            <SlotName $ls={0.04}>Repeat (column)</SlotName>
          </SlotHead>
          <Drop />
        </Slot>
        <Slot $mb={31}>
          <SlotHead>
            <SlotIcon><Svg width="20" height="19" viewBox="0 0 20 19"><path d="M6 1h8v8H6z" fill="#fff" stroke="#393939" strokeWidth="1.300" /><path d="M5.500 10.500h9V19h-9z" fill="#161616" /></Svg></SlotIcon>
            <SlotName $ls={0.04}>Repeat (row)</SlotName>
          </SlotHead>
          <Drop />
        </Slot>
        <SlotHead>
          <SlotIcon><Svg width="20" height="16" viewBox="0 0 20 16" fill="none" stroke="#393939" strokeWidth="1.300"><path d="M2.500 1h15v2.500L12 9.500V15H8V9.500L2.500 3.500z" /></Svg></SlotIcon>
          <SlotName $ls={-0.03}>Local filters</SlotName>
        </SlotHead>
      </Fields>
      <VScroll>
        <ArrowSlot><Svg width="9" height="5" viewBox="0 0 9 5" fill="#a3a3a3"><path d="M0 5h9L4.500 0z" /></Svg></ArrowSlot>
        <VThumb />
        <ArrowSlot><Svg width="9" height="5" viewBox="0 0 9 5" fill="#505050"><path d="M0 0h9L4.500 5z" /></Svg></ArrowSlot>
      </VScroll>
    </>
  );
}

function SystemTaskbar() {
  return (
    <Taskbar>
      <Weather>
        <Svg width="26" height="26" viewBox="0 0 26 26">
          <path d="M15 2c6 1 10 6 9.500 12-.5 7-6 11-12 11-4.500 0-9-3-10.500-6.500C11 20 17 12 15 2z" fill="#ffc61a" />
          <path d="M15 2c6 1 10 6 9.500 12-.3 3-1.500 5.500-3.500 7.500C22 14 20 8 15 2z" fill="#ffe43b" />
          <path d="M2.500 10.500a2.800 2.800 0 0 1 .5-5.500 4 4 0 0 1 7-.3c2.500 0 3 5-.3 5.800z" fill="#d5dee8" />
        </Svg>
        <Lines><Text $size={15} $lh={20} $ls={-1.1}>31°C</Text><Text $size={15} $lh={20} $ls={-0.25} $color="#cfd2d5">Mostly clear</Text></Lines>
      </Weather>
      <DockItem><Svg width="29" height="29" viewBox="0 0 29 29"><defs><linearGradient id="win" x1="0" y1="0" x2="1" y2="1"><stop offset="0" stopColor="#8fe4ff" /><stop offset=".5" stopColor="#3fc0ff" /><stop offset="1" stopColor="#0a93f5" /></linearGradient></defs><path d="M0 1a1 1 0 0 1 1-1h13v14H0zM15 0h13a1 1 0 0 1 1 1v13H15zM0 15h14v14H1a1 1 0 0 1-1-1zM15 15h14v13a1 1 0 0 1-1 1H15z" fill="url(#win)" /></Svg></DockItem>
      <DockItem><Svg width="28" height="29" viewBox="0 0 28 29"><path d="M9 20l-7 7" stroke="#d9dde0" strokeWidth="3.500" strokeLinecap="round" /><circle cx="15.500" cy="12" r="10.500" fill="#4b4f58" stroke="#e8eaec" strokeWidth="2.800" /></Svg></DockItem>
      <DockItem><Svg width="30" height="29" viewBox="0 0 30 29"><rect y="8" width="22" height="20" rx="1" fill="#666" /><rect x="7.500" y="0" width="22.500" height="20" rx="1" fill="#f2f2f2" /><path d="M7.500 8H22v12H7.500z" fill="#bdbdbd" /></Svg></DockItem>
      <DockItem><Svg width="29" height="29" viewBox="0 0 29 29"><defs><linearGradient id="meet" x1="0" y1="0" x2="1" y2="1"><stop offset="0" stopColor="#9560a8" /><stop offset=".5" stopColor="#6563d0" /><stop offset="1" stopColor="#5552c8" /></linearGradient></defs><path d="M14.500 0a14.300 14 0 0 1 0 28H1c1.500-1.500 2-3 1.200-5A14 14 0 0 1 14.500 0z" fill="url(#meet)" /><rect x="6.500" y="8.500" width="11.500" height="11" rx="1.500" fill="#fff" /><path d="M19 12.500l4-3v9l-4-3z" fill="#fff" /></Svg></DockItem>
      <DockItem><Svg width="23" height="30" viewBox="0 0 23 30"><rect width="23" height="30" rx="1.500" fill="#78838d" /><rect x="3" y="3" width="17" height="5.500" fill="#3fd0f5" />{[0, 1, 2].map((r) => [0, 1, 2].map((c) => <rect key={`${r}${c}`} x={3 + c * 6} y={10.5 + r * 6} width="5" height="5" fill={c === 2 && r > 0 ? '#10509a' : '#d4dae0'} />))}<rect x="15" y="16.500" width="5" height="11" fill="#10509a" /></Svg></DockItem>
      <DockItem><Svg width="30" height="28" viewBox="0 0 30 28"><path d="M0 2a1 1 0 0 1 1-1h9l3 4H0z" fill="#e0a008" /><path d="M0 5.500h11l2-1.500h16a1 1 0 0 1 1 1v22H0z" fill="#ffce3d" /><path d="M5 27v-5a2 2 0 0 1 2-2h16a2 2 0 0 1 2 2v5z" fill="#0f78d0" /><path d="M9 23.500h12" stroke="#0a4f94" strokeWidth="1.300" /></Svg></DockItem>
      <DockItem><Svg width="30" height="30" viewBox="0 0 30 30"><rect y="0" width="29" height="30" fill="#273e6b" /><path d="M15 5l9 5v10l-9 5-9-5V10z" fill="#2a78e8" /><path d="M9.500 11.500l3 7 2.500-6 2.500 6 3-7" stroke="#fff" fill="none" strokeWidth="1.400" /><path d="M21 1l7-3 3 2v11H21z" fill="#6ea2ee" /><path d="M23.500 4v4.500h5V4M26 5v3" stroke="#fff" fill="none" strokeWidth="1.200" /></Svg><Running /></DockItem>
      <DockItem>
        <Svg width="30" height="30" viewBox="0 0 30 30"><path d="M0 30l2-8a14.500 14.500 0 1 1 6 6z" fill="#fff" /><path d="M3.500 26.500l1.500-5a11.700 11.700 0 1 1 4 4z" fill="#40c351" /><path d="M10 8c-2 1-2.500 3.500-1 6 2.500 4.500 6 7 10 7.500 2 0 3.500-1.500 3.500-3.500l-3.500-2-2 2c-2.500-1-4-2.500-5-4.500l1.500-2-1.500-3.500z" fill="#fff" /><circle cx="26" cy="4" r="10" fill="#f00" /><text x="26" y="9.500" fontSize="16" textAnchor="middle" fill="#fff">1</text></Svg>
        <Running />
      </DockItem>
      <DockItem $active>
        <Svg width="30" height="30" viewBox="0 0 30 30">
          <circle cx="15" cy="15" r="14" fill="#fbbc05" />
          <path d="M15 15L2.900 8A14 14 0 0 1 27.100 8z" fill="#ea4335" />
          <path d="M15 15L2.900 8A14 14 0 0 0 14 29z" fill="#34a853" />
          <path d="M15 15l5 5-6 9c-1 0-1.500-.1-2-.2z" fill="#fbbc05" />
          <circle cx="15" cy="15" r="6.500" fill="#fff" /><circle cx="15" cy="15" r="5.200" fill="#2f7de1" />
          <circle cx="25.500" cy="4" r="9.500" fill="#5c6bc0" /><text x="25.500" y="8.500" fontSize="12" textAnchor="middle" fill="#fff">N</text>
        </Svg>
        <Running $active />
      </DockItem>
      <DockItem><Svg width="30" height="30" viewBox="0 0 30 30"><circle cx="15" cy="5.500" r="4.500" fill="#7b83eb" /><circle cx="25" cy="8" r="3" fill="#5059c9" /><path d="M20 12h10v8a5 5 0 0 1-7 4z" fill="#5059c9" /><path d="M8 12h15v9a7.500 7.500 0 0 1-14 4z" fill="#7b83eb" /><rect y="8" width="15" height="15" rx="1" fill="#4b53bc" /><text x="7.500" y="20" fontSize="12" fontWeight="700" textAnchor="middle" fill="#fff">T</text><circle cx="28" cy="5" r="5.500" fill="#c4122f" stroke="#f0d6da" strokeWidth="1" /><path d="M25 5h6" stroke="#fff" strokeWidth="1.600" /></Svg><Running /></DockItem>
      <Tray>
        <TrayIcon><Icon w={16} h={9} box={16} sw={1.500}><path d="M0 15L8 1l8 14" /></Icon></TrayIcon>
        <TrayIcon><Svg width="20" height="16" viewBox="0 0 20 16"><path d="M4 14a4 4 0 0 1 0-8 6 6 0 0 1 11-1 4.500 4.500 0 0 1 1 9z" fill="#7c8187" /><path d="M2 0l16 15.500" stroke="#e8e8e8" strokeWidth="1.400" /></Svg></TrayIcon>
        <TrayIcon><Svg width="19" height="18" viewBox="0 0 19 18"><path d="M4.500 0L9 3 4.500 6 0 3zM13.500 0L18 3l-4.500 3L9 3zM4.500 6L9 9l-4.500 3L0 9zM13.500 6L18 9l-4.500 3L9 9zM4.500 13L9 10.500V16z" fill="#f2f2f2" /><circle cx="13.500" cy="12.500" r="5.500" fill="#d81b35" /><path d="M11.500 10.500l4 4M15.500 10.500l-4 4" stroke="#fff" strokeWidth="1.400" /></Svg></TrayIcon>
        <Mic><Svg width="14" height="20" viewBox="0 0 14 20"><rect x="3.500" width="7" height="13" rx="3.500" fill="#000" /><path d="M.8 8.500a6.200 6.500 0 0 0 12.400 0M7 15.500V20" fill="none" stroke="#111" strokeWidth="1.500" /></Svg></Mic>
        <TrayIcon $w={56}><Lines $align="center" $top={2}><Text $size={15} $lh={20} $ls={-0.6}>ENG</Text><Text $size={15} $lh={20} $ls={-0.6}>IN</Text></Lines></TrayIcon>
        <TrayIcon $w={38}><Svg width="20" height="16" viewBox="0 0 20 16" fill="none" stroke="#fff" strokeWidth="1.500"><path d="M.8 5.500a13 13 0 0 1 18.400 0M3.800 8.500a9 9 0 0 1 12.400 0M6.500 11.500a5 5 0 0 1 7 0" /><circle cx="10" cy="14" r="1.300" fill="#fff" /></Svg></TrayIcon>
        <TrayIcon $w={22}><Svg width="20" height="17" viewBox="0 0 20 17" fill="none" stroke="#fff" strokeWidth="1.300"><path d="M1 5.500h3.500L9 1.500v14l-4.500-4H1zM12 5.500a4 4 0 0 1 0 6M14 3.500a7 7 0 0 1 0 10M16 1.500a9 9 0 0 1 0 14" /></Svg></TrayIcon>
        <TrayIcon $w={38}><Svg width="20" height="16" viewBox="0 0 20 16"><path d="M6 3h11.500v11.500H4V9" fill="none" stroke="#fff" strokeWidth="1.400" /><path d="M8 5.500h7v6.500H8zM18.500 7h1.500v3.500h-1.500zM0 1h1.500v2H4V1h1.500v4.500L4 7.500V10H2V7.500L0 6z" fill="#fff" /></Svg></TrayIcon>
        <Clock $align="flex-end" $top={1}><Text $size={15} $lh={20} $ls={-0.5}>23:50</Text><Text $size={15} $lh={20} $ls={-0.13}>30-05-2022</Text></Clock>
        <TrayIcon $w={50} $pr={8}><Svg width="17" height="18" viewBox="0 0 17 18" fill="none" stroke="#fff" strokeWidth="1.400"><path d="M7.500 1c5 0 8.500 4 8.500 8 0 5-4 8-8 8-3 0-5.500-1.200-7-3C8 13 10.500 7 7.500 1z" /></Svg></TrayIcon>
      </Tray>
    </Taskbar>
  );
}

export default function App() {
  return (
    <Screen>
      <Global />
      <Browser />
      <AppHeader />
      <DashboardToolbar />
      <Body>
        <LeftSide />
        <Stage>
          <StageRow>
            <DashboardCanvas />
            <FieldsPane />
          </StageRow>
          <BottomStrip><Grip $w={18} $h={1} /><Grip $w={18} $h={2} $bg="#6f6f6f" /></BottomStrip>
        </Stage>
      </Body>
      <SystemTaskbar />
    </Screen>
  );
}
